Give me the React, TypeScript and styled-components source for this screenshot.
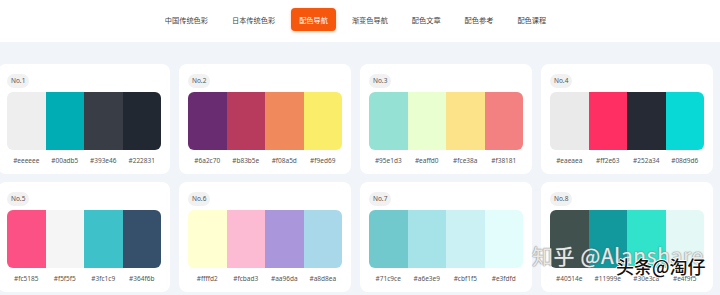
import React from "react";
import styled, { createGlobalStyle } from "styled-components";

const Global = createGlobalStyle`
  html, body { margin: 0; padding: 0; background: #f1f4f8; }
  body { width: 720px; height: 295px; overflow: hidden; font-family: "Noto Sans", "Noto Sans CJK SC", sans-serif; }
`;

const Page = styled.div`
  position: relative;
  width: 720px;
  height: 295px;
  overflow: hidden;
`;

const TopBar = styled.header`
  background: #ffffff;
  height: 42px;
  display: flex;
  justify-content: center;
  align-items: center;
  padding-right: 9px;
  box-sizing: border-box;
`;

const Nav = styled.nav`
  display: flex;
  gap: 7px;
  align-items: center;
  margin-top: -3px;
`;

const NavItem = styled.a<{ $active?: boolean }>`
  display: flex;
  align-items: center;
  height: 23px;
  padding: 0 8.5px;
  border-radius: 4px;
  font-family: "Noto Sans CJK SC", sans-serif;
  font-size: 7.2px;
  color: ${(p) => (p.$active ? "#ffffff" : "#444")};
  background: ${(p) => (p.$active ? "#f5570d" : "transparent")};
  box-shadow: ${(p) => (p.$active ? "0 1px 3px rgba(245,87,13,0.35)" : "none")};
`;

const Grid = styled.main`
  display: grid;
  grid-template-columns: repeat(4, 172px);
  column-gap: 9px;
  row-gap: 8px;
  padding-top: 22px;
  margin-left: -2px;
`;

const Card = styled.section`
  background: #ffffff;
  border-radius: 8px;
  height: 110px;
  box-sizing: border-box;
  padding: 10px 9px 0;
  display: flex;
  flex-direction: column;
`;

const Badge = styled.span`
  align-self: flex-start;
  height: 14px;
  line-height: 14px;
  padding: 0 4px;
  border-radius: 7px;
  background: #f1f1f1;
  color: #555;
  font-size: 6.5px;
  margin-bottom: 4px;
`;

const Swatches = styled.div`
  display: flex;
  height: 58px;
  border-radius: 6px;
  overflow: hidden;
`;

const Swatch = styled.div<{ $c: string }>`
  flex: 1;
  background: ${(p) => p.$c};
`;

const Labels = styled.div`
  display: flex;
  height: 20px;
  align-items: center;
`;

const Label = styled.span`
  flex: 1;
  text-align: center;
  font-size: 6.5px;
  color: #555;
`;

const Watermark = styled.div`
  position: absolute;
  left: 532px;
  top: 240px;
  font-family: "Noto Sans CJK SC", sans-serif;
  font-size: 21px;
  letter-spacing: 0.6px;
  color: rgba(255, 255, 255, 0.8);
  text-shadow: 0 0 1px #999, 0 0 1px #999, 0 0 2px rgba(0,0,0,0.3);
  white-space: nowrap;
`;

const Stamp = styled.div`
  position: absolute;
  left: 616px;
  top: 253px;
  font-family: "Noto Sans CJK SC", sans-serif;
  font-size: 18px;
  font-weight: 500;
  color: #111;
  text-shadow: 1px 0 0 #fff, -1px 0 0 #fff, 0 1px 0 #fff, 0 -1px 0 #fff;
  white-space: nowrap;
`;

const navItems = ["中国传统色彩", "日本传统色彩", "配色导航", "渐变色导航", "配色文章", "配色参考", "配色课程"];

const palettes: string[][] = [
  ["#eeeeee", "#00adb5", "#393e46", "#222831"],
  ["#6a2c70", "#b83b5e", "#f08a5d", "#f9ed69"],
  ["#95e1d3", "#eaffd0", "#fce38a", "#f38181"],
  ["#eaeaea", "#ff2e63", "#252a34", "#08d9d6"],
  ["#fc5185", "#f5f5f5", "#3fc1c9", "#364f6b"],
  ["#ffffd2", "#fcbad3", "#aa96da", "#a8d8ea"],
  ["#71c9ce", "#a6e3e9", "#cbf1f5", "#e3fdfd"],
  ["#40514e", "#11999e", "#30e3ca", "#e4f9f5"],
];

export default function App() {
  return (
    <>
      <Global />
      <Page>
        <TopBar>
          <Nav>
            {navItems.map((n) => (
              <NavItem key={n} $active={n === "配色导航"}>
                {n}
              </NavItem>
            ))}
          </Nav>
        </TopBar>
        <Grid>
          {palettes.map((p, i) => (
            <Card key={i}>
              <Badge>No.{i + 1}</Badge>
              <Swatches>
                {p.map((c) => (
                  <Swatch key={c} $c={c} />
                ))}
              </Swatches>
              <Labels>
                {p.map((c) => (
                  <Label key={c}>{c}</Label>
                ))}
              </Labels>
            </Card>
          ))}
        </Grid>
        <Watermark>知乎 @Alanshare</Watermark>
        <Stamp>头条@淘仔</Stamp>
      </Page>
    </>
  );
}
